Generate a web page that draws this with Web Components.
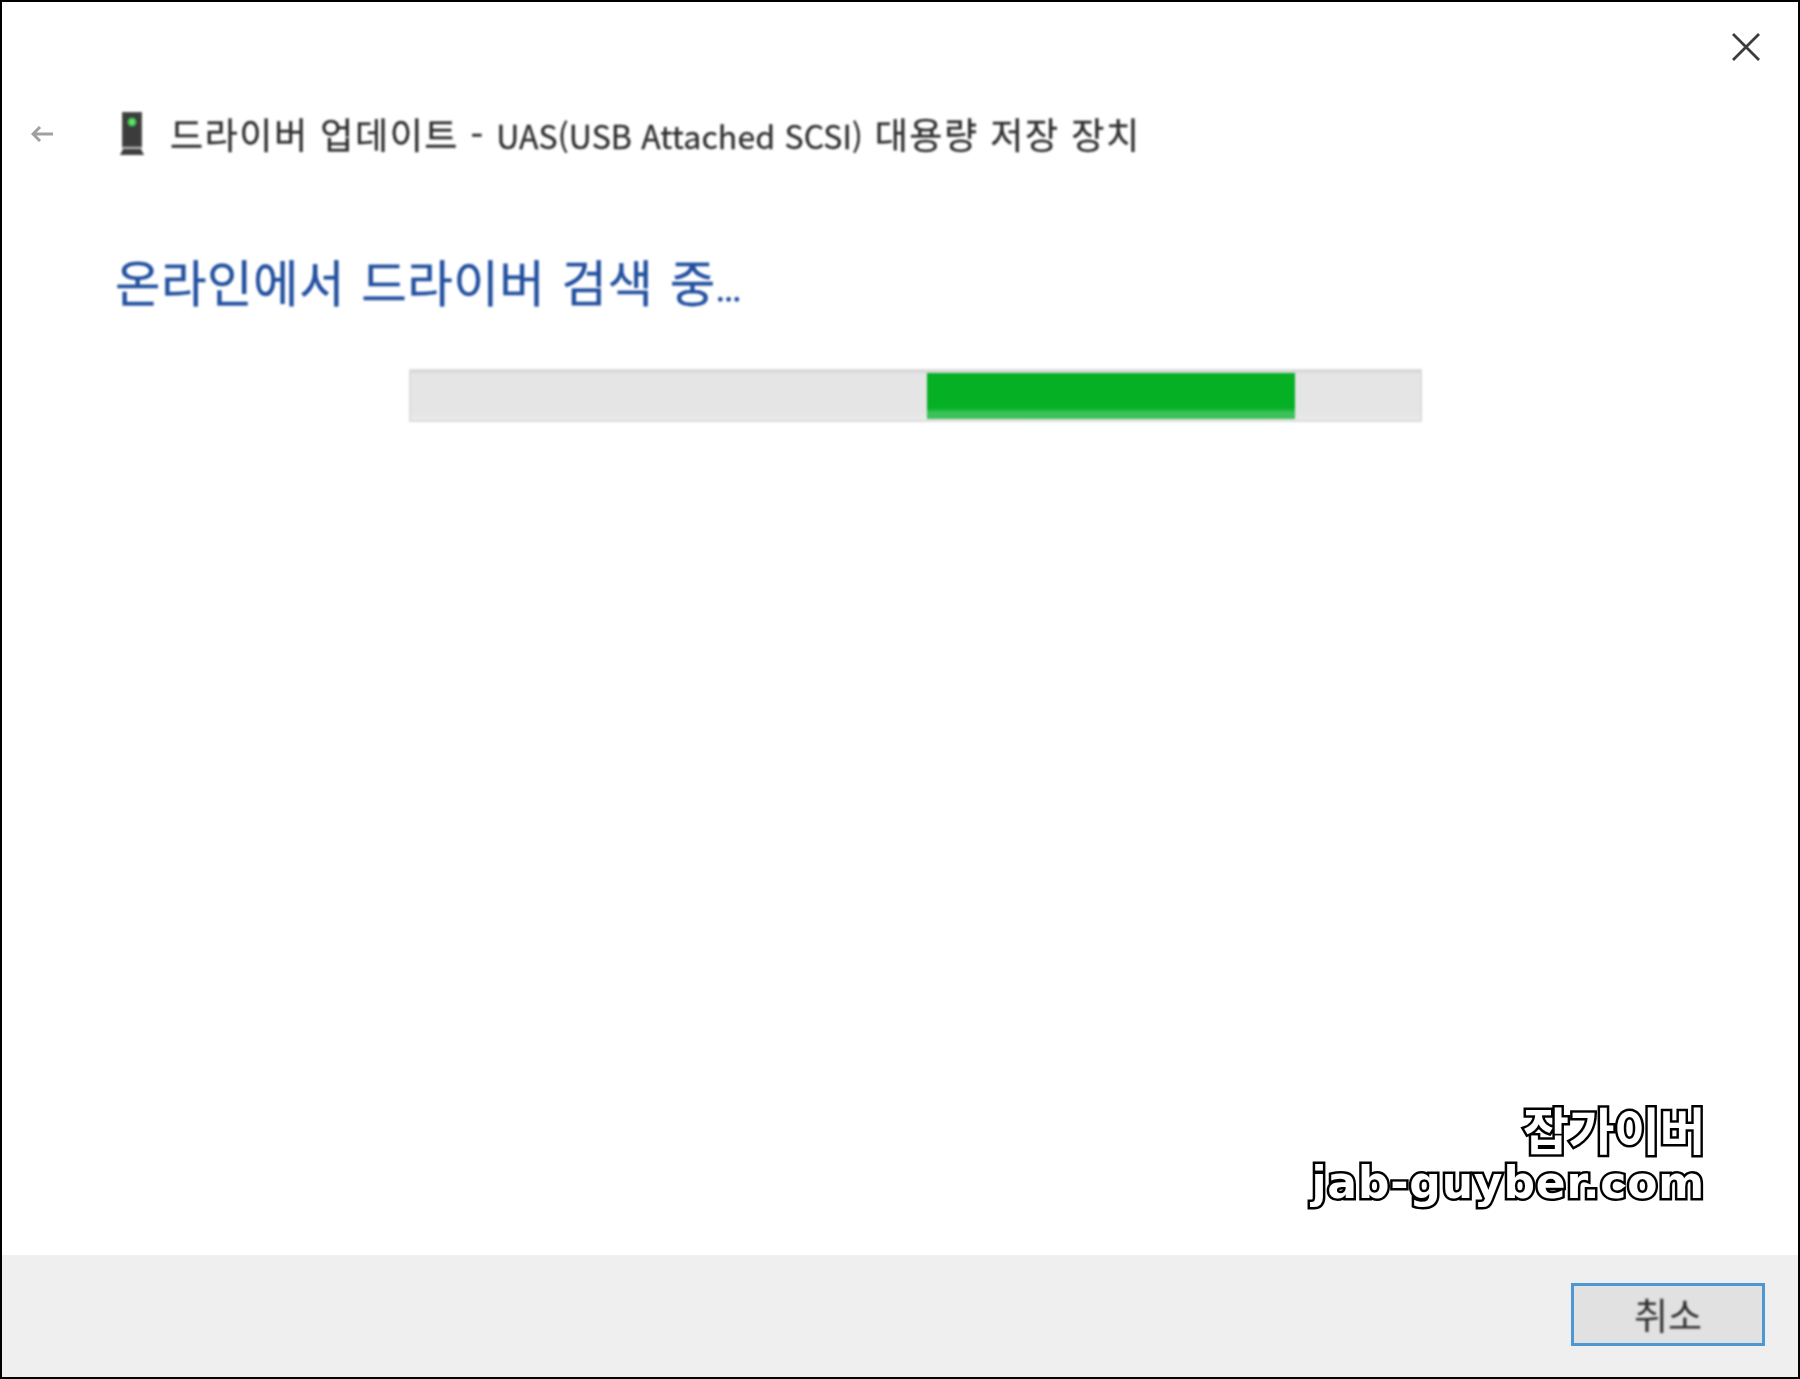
<!DOCTYPE html>
<html lang="ko">
<head>
<meta charset="utf-8">
<title>드라이버 업데이트</title>
<style>
  html, body { margin: 0; padding: 0; background: #fff; }
  body { font-family: "Noto Sans CJK KR", "Noto Sans", sans-serif; }
</style>
</head>
<body>
<driver-dialog>
  <dialog-header slot="header">드라이버 업데이트 - <span class="latin">UAS(USB Attached SCSI)</span> 대용량 저장 장치</dialog-header>
  <search-status slot="content">온라인에서 드라이버 검색 중<span class="dots">...</span></search-status>
  <site-stamp slot="content" name="잡가이버" url="jab-guyber.com"></site-stamp>
  <dialog-footer slot="footer" label="취소"></dialog-footer>
</driver-dialog>

<script>
class DriverDialog extends HTMLElement {
  constructor() {
    super();
    this.attachShadow({ mode: "open" });
  }

  connectedCallback() {
    this.shadowRoot.innerHTML = `
      <style>
        :host {
          display: flex;
          flex-direction: column;
          box-sizing: border-box;
          width: 1800px;
          height: 1379px;
          border: 2px solid #000;
          background: #fff;
          overflow: hidden;
        }
        .content {
          flex: 1;
          display: flex;
          flex-direction: column;
          justify-content: space-between;
          min-height: 0;
        }
      </style>
      <slot name="header"></slot>
      <div class="content"><slot name="content"></slot></div>
      <slot name="footer"></slot>
    `;
  }
}

class DialogHeader extends HTMLElement {
  constructor() {
    super();
    this.attachShadow({ mode: "open" });
  }

  connectedCallback() {
    this.shadowRoot.innerHTML = `
      <style>
        :host { display: block; color: #333; }
        .top { display: flex; justify-content: flex-end; padding: 29px 36px 0 0; }
        .close { display: block; width: 32px; height: 32px; }
        .row {
          display: flex;
          align-items: center;
          height: 52px;
          margin-top: 45px;
          padding-left: 29px;
        }
        .back { width: 22px; height: 16px; margin-right: 66px; }
        .device { width: 26px; height: 44px; margin-right: 25px; }
        h1 {
          margin: 0;
          font: 400 36px/52px "Noto Sans CJK KR", "Noto Sans", sans-serif;
          letter-spacing: 1.55px;
          color: #2e2e2e;
          -webkit-text-stroke: 0.3px #2e2e2e;
          white-space: pre;
          filter: blur(0.8px);
        }
        ::slotted(.latin) {
          font-size: 32px;
          letter-spacing: 0.15px;
        }
      </style>
      <div class="top">
        <svg class="close" viewBox="0 0 32 32" fill="none" stroke="#3c3c3c" stroke-width="2.8" style="filter:blur(.5px)">
          <path d="M3 3 L29 29 M29 3 L3 29"/>
        </svg>
      </div>
      <div class="row">
        <svg class="back" viewBox="0 0 22 16" fill="none" stroke="#a0a0a0" stroke-width="3" style="filter:blur(.7px)">
          <path d="M22 8 H2 M9 1 L2 8 L9 15"/>
        </svg>
        <svg class="device" viewBox="0 0 26 44" style="filter:blur(.8px)">
          <rect x="3" y="0" width="20" height="35" fill="#4a4a4a"/>
          <rect x="5" y="2" width="16" height="31" fill="#3c3c3c"/>
          <rect x="3" y="35" width="20" height="2" fill="#bdbdbd"/>
          <path d="M4 37 H22 L25 43 H1 Z" fill="#3f3f3f"/>
          <circle cx="13" cy="10" r="4.5" fill="#3fc64a"/>
          <circle cx="13" cy="10" r="2" fill="#7fe88a"/>
        </svg>
        <h1><slot></slot></h1>
      </div>
    `;
  }
}

class SearchStatus extends HTMLElement {
  constructor() {
    super();
    this.attachShadow({ mode: "open" });
  }

  connectedCallback() {
    this.shadowRoot.innerHTML = `
      <style>
        :host { display: block; padding: 88px 0 0 113px; }
        h2 {
          margin: 0;
          font: 400 49.5px/66px "Noto Sans CJK KR", "Noto Sans", sans-serif;
          letter-spacing: 0.45px;
          word-spacing: 2px;
          color: #22509f;
          -webkit-text-stroke: 0.3px #22509f;
          white-space: pre;
          filter: blur(0.8px);
        }
        ::slotted(.dots) {
          font-size: 33px;
          letter-spacing: -1px;
        }
        progress-bar { margin: 48px 0 0 294px; }
      </style>
      <h2><slot></slot></h2>
      <progress-bar start="51.1" size="36.5"></progress-bar>
    `;
  }
}

class ProgressBar extends HTMLElement {
  constructor() {
    super();
    this.attachShadow({ mode: "open" });
  }

  connectedCallback() {
    const start = this.getAttribute("start") || 0;
    const size = this.getAttribute("size") || 0;
    this.shadowRoot.innerHTML = `
      <style>
        :host {
          display: block;
          box-sizing: border-box;
          width: 1013px;
          height: 53px;
          padding: 2px 0 1px;
          background: linear-gradient(#d8d8d8 0 2px, #e5e5e5 2px 85%, #ebebeb);
          border: 2px solid #dcdcdc;
          filter: blur(0.8px);
        }
        .fill {
          width: ${size}%;
          height: 100%;
          margin-left: ${start}%;
          background: linear-gradient(#06b025 0 76%, #3cc258 86%);
        }
      </style>
      <div class="fill"></div>
    `;
  }
}

class SiteStamp extends HTMLElement {
  constructor() {
    super();
    this.attachShadow({ mode: "open" });
  }

  connectedCallback() {
    const name = this.getAttribute("name") || "";
    const url = this.getAttribute("url") || "";
    this.shadowRoot.innerHTML = `
      <style>
        :host {
          display: block;
          padding: 0 93px 46px 0;
          text-align: right;
          color: #fff;
          -webkit-text-stroke: 5px #000;
          filter: blur(0.3px);
        }
        div { paint-order: stroke fill; white-space: pre; }
        .name {
          font: 700 50px/58px "Noto Sans CJK KR", "Noto Sans", sans-serif;
          letter-spacing: -0.5px;
        }
        .url {
          font: 700 44px/52px "DejaVu Sans", "Noto Sans", sans-serif;
          letter-spacing: 0.85px;
        }
      </style>
      <div class="name">${name}</div>
      <div class="url">${url}</div>
    `;
  }
}

class DialogFooter extends HTMLElement {
  constructor() {
    super();
    this.attachShadow({ mode: "open" });
  }

  connectedCallback() {
    const label = this.getAttribute("label") || "";
    this.shadowRoot.innerHTML = `
      <style>
        :host {
          display: flex;
          justify-content: flex-end;
          box-sizing: border-box;
          height: 122px;
          padding: 28px 33px 0 0;
          background: #efefef;
        }
        button {
          box-sizing: border-box;
          width: 194px;
          height: 63px;
          padding: 0;
          background: #e1e1e1;
          border: 3px solid #4f97d0;
          font: 400 37px/1 "Noto Sans CJK KR", "Noto Sans", sans-serif;
          color: #2e2e2e;
        }
        span { display: block; filter: blur(0.8px); }
      </style>
      <button><span>${label}</span></button>
    `;
  }
}

customElements.define("driver-dialog", DriverDialog);
customElements.define("dialog-header", DialogHeader);
customElements.define("search-status", SearchStatus);
customElements.define("progress-bar", ProgressBar);
customElements.define("site-stamp", SiteStamp);
customElements.define("dialog-footer", DialogFooter);
</script>
</body>
</html>
